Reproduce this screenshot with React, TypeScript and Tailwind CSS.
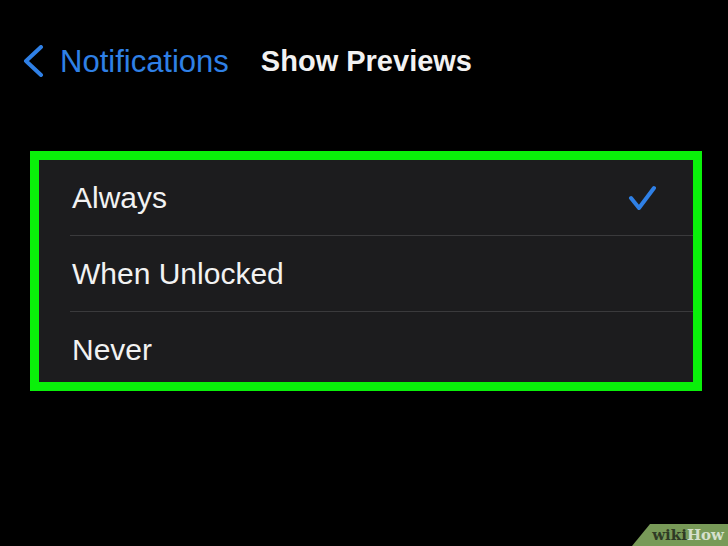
const options = ['Always', 'When Unlocked', 'Never'];

export default function App() {
    const selected = 'Always';

    return (
        <div className="relative w-[728px] h-[546px] overflow-hidden bg-black" style={{fontFamily: '"Liberation Sans", Arial, sans-serif'}}>
            <div className="mt-[45px] h-[32px] pl-[23px] flex items-center">
                <svg width="22" height="32" viewBox="0 0 22 32" fill="none">
                    <path d="M18 2 L3 16 L18 30" stroke="#2f80e6" strokeWidth="4" strokeLinecap="round" strokeLinejoin="round"/>
                </svg>
                <span className="ml-[15px] text-[31px] leading-none text-[#2f80e6]">Notifications</span>
                <span className="ml-[32px] text-[29px] leading-none font-bold text-[#f2f2f2]">Show Previews</span>
            </div>

            <div className="mt-[74px] ml-[30px] w-[672px] border-[9px] border-[#0af00a]">
                <div className="bg-[#1c1c1e]">
                    {options.map((option, i) => (
                        <div key={option}>
                            {i > 0 && <div className="ml-[31px] h-px bg-[#3a3a3c]"/>}
                            <div className={`flex items-center justify-between pl-[33px] pr-[37px] ${i === 2 ? 'h-[70px] pt-[5px]' : 'h-[75px]'}`}>
                                <span className="text-[30px] text-[#f2f2f2]">{option}</span>
                                {option === selected && (
                                    <svg width="28" height="26" viewBox="0 0 28 26" fill="none">
                                        <path d="M3 13 L11 23 L26 3" stroke="#2f80e6" strokeWidth="4" strokeLinecap="round" strokeLinejoin="round"/>
                                    </svg>
                                )}
                            </div>
                        </div>
                    ))}
                </div>
            </div>

            <div className="absolute right-0 bottom-0 w-[96px] h-[22px] bg-[#789a58] [clip-path:polygon(18px_0,100%_0,100%_100%,0_100%)] flex items-center justify-end pr-[4px]">
                <span className="text-[15px] font-bold leading-none text-[#2f3a25]" style={{fontFamily: '"DejaVu Serif", serif'}}>wiki</span>
                <span className="text-[15px] font-bold leading-none text-[#d6e0cc]" style={{fontFamily: '"DejaVu Serif", serif'}}>How</span>
            </div>
        </div>
    );
}
